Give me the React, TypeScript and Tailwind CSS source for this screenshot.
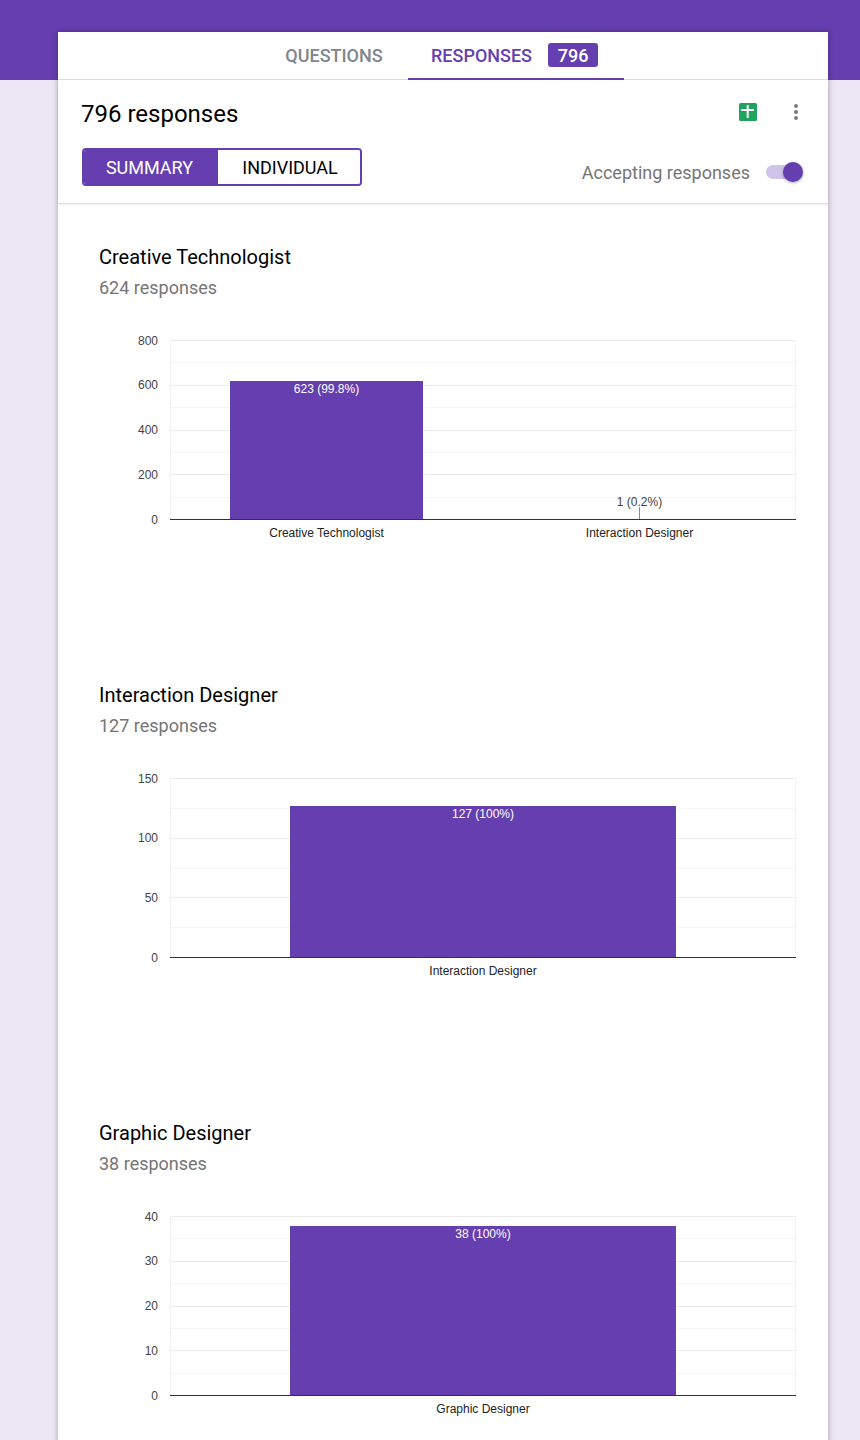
import React from 'react';

const charts = [
  {
    title: 'Creative Technologist',
    count: '624 responses',
    ticks: ['800', '600', '400', '200', '0'],
    bars: [
      { x: 230, w: 193, top: 381, label: '623 (99.8%)', name: 'Creative Technologist', cx: 326.5 },
      { x: 639, w: 1, top: 507, label: '1 (0.2%)', name: 'Interaction Designer', cx: 639.5, small: true },
    ],
  },
  {
    title: 'Interaction Designer',
    count: '127 responses',
    ticks: ['150', '100', '50', '0'],
    bars: [{ x: 290, w: 386, top: 368, label: '127 (100%)', name: 'Interaction Designer', cx: 483 }],
  },
  {
    title: 'Graphic Designer',
    count: '38 responses',
    ticks: ['40', '30', '20', '10', '0'],
    bars: [{ x: 290, w: 386, top: 350, label: '38 (100%)', name: 'Graphic Designer', cx: 483 }],
  },
];

type Chart = (typeof charts)[number];

const BarChart = ({ chart }: { chart: Chart }) => {
  const top = 340;
  const bottom = 519;
  const steps = chart.ticks.length - 1;
  const minor = steps * 2;
  return (
    <svg width="770" height="230" viewBox="58 330 770 230" className="block font-['Liberation_Sans',Arial,sans-serif]">
      {Array.from({ length: minor + 1 }).map((_, i) => {
        const y = Math.round(top + ((bottom - top) / minor) * i) + 0.5;
        return <line key={i} x1="170" x2="796" y1={y} y2={y} stroke={i % 2 ? '#f5f5f5' : '#ebebeb'} />;
      })}
      <line x1="170.5" x2="170.5" y1={top} y2={bottom} stroke="#f2f2f2" />
      <line x1="795.5" x2="795.5" y1={top} y2={bottom} stroke="#f2f2f2" />
      {chart.ticks.map((t, i) => (
        <text key={t} x="158" y={top + ((bottom - top) / steps) * i + 4.6} textAnchor="end" fontSize="12" fill="#444444">
          {t}
        </text>
      ))}
      {chart.bars.map((b) => (
        <g key={b.name}>
          <rect x={b.x} y={b.top} width={b.w} height={bottom - b.top} fill={b.small ? '#8a8a8a' : '#653fb0'} />
          <text
            x={b.cx}
            y={b.small ? 506 : b.top + 12}
            textAnchor="middle"
            fontSize="12"
            fill={b.small ? '#404040' : '#ffffff'}
          >
            {b.label}
          </text>
          <text x={b.cx} y="537" textAnchor="middle" fontSize="12" fill="#222222">
            {b.name}
          </text>
        </g>
      ))}
      <line x1="170" x2="796" y1="519.5" y2="519.5" stroke="#333333" />
    </svg>
  );
};

const SheetsIcon = () => (
  <svg width="18" height="18" viewBox="0 0 18 18">
    <rect width="18" height="18" rx="1.5" fill="#21a35f" />
    <rect x="2" y="6" width="13" height="2" fill="#fff" />
    <rect x="7.7" y="2" width="2" height="13" fill="#fff" />
  </svg>
);

export default function App() {
  return (
    <div className="h-[1440px] overflow-hidden bg-[#ece6f5] font-['Roboto',sans-serif]">
      <div className="h-20 bg-[#653fb0]" />
      <div className="relative mx-[58px] -mt-12 w-[770px] bg-white shadow-[0_0_6px_rgba(0,0,0,0.3)]">
        <div className="flex h-12 justify-center border-b border-[#e0e0e0]">
          <div className="flex w-[146px] items-center justify-center pr-[2px] text-[18px] font-medium text-[#80868b]">QUESTIONS</div>
          <div className="-mb-px flex w-[216px] items-center gap-4 border-b-2 border-[#653fb0] pl-[23px] text-[18px] font-medium text-[#653fb0]">
            RESPONSES
            <span className="flex h-6 w-[50px] items-center justify-center rounded-[3px] bg-[#653fb0] text-white">796</span>
          </div>
        </div>

        <div className="h-[124px] border-b border-[#e0e0e0] shadow-[0_1px_2px_rgba(0,0,0,0.08)]">
          <div className="flex items-start justify-between pl-[23px] pr-[30px]">
            <div className="pt-[18px] text-2xl leading-8 text-black">796 responses</div>
            <div className="flex items-center gap-[37px] pt-[23px]">
              <SheetsIcon />
              <div className="flex w-1 flex-col gap-[2px]">
                <span className="size-1 rounded-full bg-[#7a7a7a]" />
                <span className="size-1 rounded-full bg-[#7a7a7a]" />
                <span className="size-1 rounded-full bg-[#7a7a7a]" />
              </div>
            </div>
          </div>
          <div className="flex items-start justify-between pl-6 pr-7 pt-[18px]">
            <div className="flex h-[38px] w-[280px] overflow-hidden rounded border-2 border-[#653fb0] text-[18px]">
              <div className="flex w-[134px] items-center justify-center bg-[#653fb0] pr-[3px] text-white">SUMMARY</div>
              <div className="flex flex-1 items-center justify-center bg-white pl-[2px] text-black">INDIVIDUAL</div>
            </div>
            <div className="mt-[10px] flex h-7 items-center gap-4">
              <span className="text-[18px] text-[#757575]">Accepting responses</span>
              <div className="relative h-[14px] w-[34px] rounded-full bg-[#d1c4e9]">
                <span className="absolute -top-[3px] left-[17px] size-5 rounded-full bg-[#653fb0] shadow-[0_1px_3px_rgba(0,0,0,0.35)]" />
              </div>
            </div>
          </div>
        </div>

        <div className="flex flex-col pt-[39px]">
          {charts.map((chart) => (
            <section key={chart.title} className="h-[438px]">
              <h2 className="pl-[41px] text-xl leading-7 text-black">{chart.title}</h2>
              <p className="mt-[3px] pl-[41px] text-[18px] leading-7 text-[#757575]">{chart.count}</p>
              <div className="mt-7">
                <BarChart chart={chart} />
              </div>
            </section>
          ))}
        </div>
      </div>
    </div>
  );
}
